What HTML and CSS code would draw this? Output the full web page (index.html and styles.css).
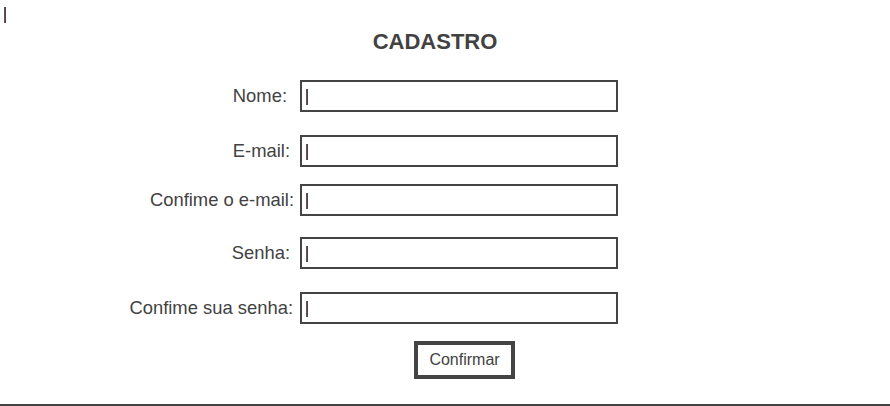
FILE: index.html
```html
<!DOCTYPE html>
<html lang="pt-BR">
<head>
<meta charset="utf-8">
<title>Cadastro</title>
<link rel="stylesheet" href="styles.css">
</head>
<body>
<div class="page">
  <span class="caret caret-top"></span>
  <h1 class="title">CADASTRO</h1>
  <form class="form">
    <div class="row row-1">
      <label class="label label-nome">Nome:</label>
      <div class="field"><span class="caret"></span></div>
    </div>
    <div class="row row-2">
      <label class="label label-email">E-mail:</label>
      <div class="field"><span class="caret"></span></div>
    </div>
    <div class="row row-3">
      <label class="label">Confime o e-mail:</label>
      <div class="field"><span class="caret"></span></div>
    </div>
    <div class="row row-4">
      <label class="label label-senha">Senha:</label>
      <div class="field"><span class="caret"></span></div>
    </div>
    <div class="row row-5">
      <label class="label label-senha2">Confime sua senha:</label>
      <div class="field"><span class="caret"></span></div>
    </div>
    <div class="actions">
      <button type="button" class="btn">Confirmar</button>
    </div>
  </form>
</div>
</body>
</html>
```

FILE: styles.css
```css
html, body {
  margin: 0;
  padding: 0;
  background: #fff;
}

body {
  font-family: "Liberation Sans", Arial, sans-serif;
  color: #424242;
}

.page {
  height: 406px;
  box-sizing: border-box;
  border-bottom: 2px solid #444;
  padding-top: 7px;
}

.caret {
  display: block;
  width: 1px;
  height: 16px;
  background: #9a4700;
  border-right: 1px solid #1f4f9a;
}

.caret-top {
  margin-left: 4px;
}

.title {
  width: 870px;
  margin: 6px 0 0 0;
  text-align: center;
  font-size: 22px;
  font-weight: bold;
  line-height: 25px;
  color: #424242;
}

.form {
  margin: 0;
}

.row {
  display: flex;
  align-items: center;
  height: 32px;
}

.row-1 { margin-top: 26px; }
.row-2 { margin-top: 23px; }
.row-3 { margin-top: 17px; }
.row-4 { margin-top: 21px; }
.row-5 { margin-top: 23px; }

.label {
  width: 300px;
  box-sizing: border-box;
  padding-right: 6px;
  text-align: right;
  font-size: 18.4px;
  line-height: 20px;
  padding-bottom: 1px;
}

.label-nome { padding-right: 13px; }
.label-email { padding-right: 10px; }
.label-senha { padding-right: 10px; }
.label-senha2 { padding-right: 7px; }

.field {
  width: 318px;
  height: 32px;
  box-sizing: border-box;
  border: 2px solid #444;
  padding: 7px 0 0 4px;
}

.actions {
  padding-left: 414px;
  margin-top: 17px;
}

.btn {
  display: block;
  width: 101px;
  height: 38px;
  box-sizing: border-box;
  border: 4px solid #444;
  background: #fff;
  color: #424242;
  font-family: "Liberation Sans", Arial, sans-serif;
  font-size: 16px;
  padding: 0 0 1px 0;
  margin: 0;
}
```
